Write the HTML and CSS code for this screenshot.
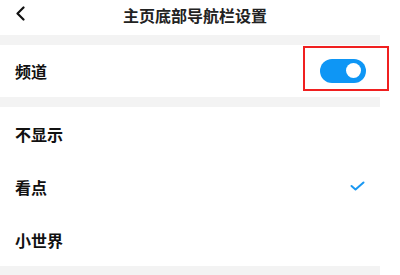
FILE: index.html
```html
<!DOCTYPE html>
<html lang="zh">
<head>
<meta charset="utf-8">
<link rel="stylesheet" href="styles.css">
</head>
<body>
<div class="page">
  <header class="nav">
    <svg class="back" width="10" height="15" viewBox="0 0 10 15"><path d="M8.5 1.5 L2.5 7.5 L8.5 13.5" fill="none" stroke="#111" stroke-width="2.2" stroke-linecap="round" stroke-linejoin="round"/></svg>
    <div class="title">主页底部导航栏设置</div>
  </header>
  <div class="band"></div>
  <div class="row switch-row">
    <span class="label">频道</span>
    <div class="toggle"><div class="knob"></div></div>
    <div class="highlight"></div>
  </div>
  <div class="band"></div>
  <div class="row"><span class="label">不显示</span></div>
  <div class="row"><span class="label">看点</span>
    <svg class="check" width="15" height="10" viewBox="0 0 15 10"><path d="M1.5 5 L5.5 8.5 L13.5 1.5" fill="none" stroke="#1a98f2" stroke-width="2" stroke-linecap="round" stroke-linejoin="round"/></svg>
  </div>
  <div class="row"><span class="label">小世界</span></div>
  <div class="band"></div>
</div>
</body>
</html>
```
FILE: styles.css
```css
* { box-sizing: border-box; }
html, body { margin: 0; padding: 0; background: #fff; }
body { font-family: "Noto Sans CJK SC", "Noto Sans", sans-serif; width: 400px; height: 275px; overflow: hidden; }
.page { display: flex; flex-direction: column; width: 400px; }
.nav { position: relative; height: 35px; display: flex; align-items: center; justify-content: center; }
.back { position: absolute; left: 15px; top: 6px; }
.title { font-size: 16px; font-weight: 700; color: #222; line-height: 1; margin-left: -10px; margin-top: -6px; }
.band { height: 10px; width: 380px; background: #f3f3f3; }
.row { position: relative; height: 53px; display: flex; align-items: center; justify-content: space-between; padding: 0 35px 0 15px; }
.switch-row { height: 52px; padding-right: 34px; }
.label { font-size: 16px; font-weight: 700; color: #111; line-height: 1; }
.toggle { width: 46px; height: 24px; border-radius: 12px; background: #0e96f5; position: relative; margin-top: -1px; }
.knob { position: absolute; right: 5px; top: 4.5px; width: 15px; height: 15px; border-radius: 50%; background: #fff; }
.highlight { position: absolute; left: 303px; top: 1px; width: 86px; height: 45px; border: 2px solid #f02020; }
.check { margin-right: 0; margin-top: -2px; }
```
